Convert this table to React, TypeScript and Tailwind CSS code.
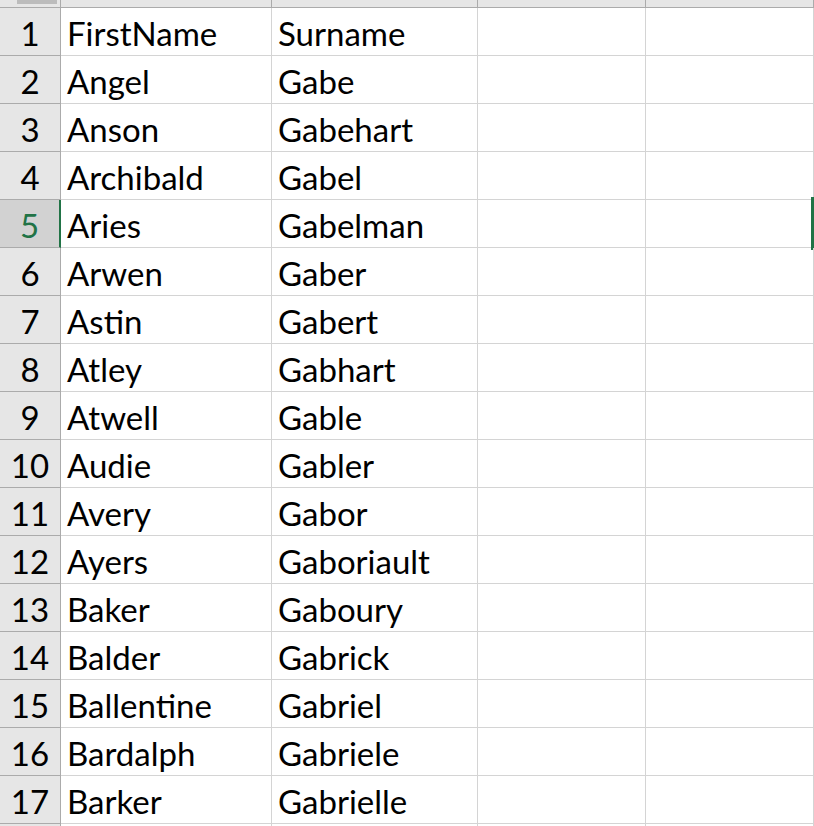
import React from 'react';

const rows: [string, string][] = [
  ['FirstName', 'Surname'],
  ['Angel', 'Gabe'],
  ['Anson', 'Gabehart'],
  ['Archibald', 'Gabel'],
  ['Aries', 'Gabelman'],
  ['Arwen', 'Gaber'],
  ['Astin', 'Gabert'],
  ['Atley', 'Gabhart'],
  ['Atwell', 'Gable'],
  ['Audie', 'Gabler'],
  ['Avery', 'Gabor'],
  ['Ayers', 'Gaboriault'],
  ['Baker', 'Gaboury'],
  ['Balder', 'Gabrick'],
  ['Ballentine', 'Gabriel'],
  ['Bardalph', 'Gabriele'],
  ['Barker', 'Gabrielle'],
  ['', ''],
];

const SELECTED = 5;

const App: React.FC = () => {
  return (
    <div className="w-[814px] h-[826px] overflow-hidden bg-white font-['Lato','Liberation_Sans',sans-serif] text-black">
      {/* Column headers strip */}
      <div className="flex h-[8px] bg-[#e6e6e6] border-b border-[#ababab]">
        <div className="relative w-[61px] shrink-0 border-r border-[#ababab]">
          <div className="absolute left-[17px] top-0 w-[40px] h-[4px] bg-[#bcbcbc]" />
        </div>
        <div className="w-[211px] shrink-0 border-r border-[#ababab]" />
        <div className="w-[206px] shrink-0 border-r border-[#ababab]" />
        <div className="w-[168px] shrink-0 border-r border-[#ababab]" />
        <div className="w-[168px] shrink-0 border-r border-[#ababab]" />
      </div>

      {rows.map(([first, last], i) => {
        const n = i + 1;
        const sel = n === SELECTED;
        // last row is only a sliver at the bottom edge, its number is hidden
        const label = i < 17 ? n : '';
        return (
          <div key={n} className="relative flex h-[48px] text-[33px] leading-none">
            <div
              className={
                sel
                  ? 'w-[61px] shrink-0 flex items-end justify-center pb-[5px] bg-[#d2d2d2] text-[#217346] border-r-2 border-b border-r-[#217346] border-b-[#ababab]'
                  : 'w-[61px] shrink-0 flex items-end justify-center pb-[5px] bg-[#e6e6e6] border-r border-b border-[#ababab]'
              }
            >
              {label}
            </div>
            <div className="w-[211px] shrink-0 flex items-end pl-[6px] pb-[5px] border-r border-b border-[#d4d4d4]">
              {first}
            </div>
            <div className="w-[206px] shrink-0 flex items-end pl-[6px] pb-[5px] border-r border-b border-[#d4d4d4]">
              {last}
            </div>
            <div className="w-[168px] shrink-0 border-r border-b border-[#d4d4d4]" />
            <div className="w-[168px] shrink-0 border-r border-b border-[#d4d4d4]" />
            {sel && <div className="absolute right-0 top-[-3px] w-[3px] h-[53px] bg-[#217346]" />}
          </div>
        );
      })}
    </div>
  );
};

export default App;
